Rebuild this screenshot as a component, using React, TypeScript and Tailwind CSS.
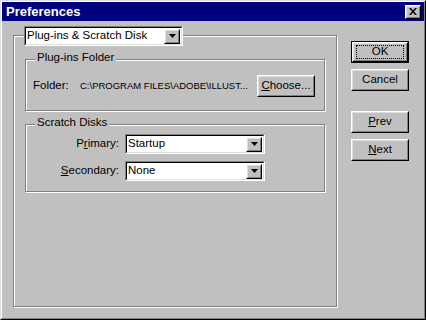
import type { ReactNode } from 'react';

function Raised({ children, className = '' }: { children: ReactNode; className?: string }) {
  return (
    <div className={`border border-t-white border-l-white border-r-black border-b-black ${className}`}>
      <div className="w-full h-full border border-t-[#dfdfdf] border-l-[#dfdfdf] border-r-[#808080] border-b-[#808080] bg-[#c0c0c0] flex items-center justify-center">
        {children}
      </div>
    </div>
  );
}

function Arrow() {
  return (
    <Raised className="w-[16px] h-[15px] shrink-0">
      <svg width="7" height="4" viewBox="0 0 7 4">
        <path d="M0 0h7L3.5 4z" fill="#000" />
      </svg>
    </Raised>
  );
}

function Select({ value, className = '' }: { value: string; className?: string }) {
  return (
    <div className={`border border-t-[#808080] border-l-[#808080] border-r-white border-b-white ${className}`}>
      <div className="w-full h-full border border-t-black border-l-black border-r-[#dfdfdf] border-b-[#dfdfdf] bg-white flex items-center pl-[1px] pr-[1px]">
        <span className="flex-1 leading-none">{value}</span>
        <Arrow />
      </div>
    </div>
  );
}

function Button({ children, isDefault = false }: { children: ReactNode; isDefault?: boolean }) {
  if (isDefault) {
    return (
      <div className="w-[58px] h-[22px] border border-black">
        <Raised className="w-full h-full">
          <div className="w-[48px] h-[14px] border border-dotted border-black flex items-center justify-center leading-none">
            {children}
          </div>
        </Raised>
      </div>
    );
  }
  return (
    <Raised className="w-[58px] h-[22px]">
      <span className="leading-none">{children}</span>
    </Raised>
  );
}

function Group({ title, className = '', children }: { title: string; className?: string; children: ReactNode }) {
  return (
    <div className={`relative border border-[#808080] shadow-[inset_1px_1px_0_#fff,1px_1px_0_#fff] ${className}`}>
      <span className="absolute left-[9px] top-[-8px] px-[2px] bg-[#c0c0c0] leading-none">{title}</span>
      {children}
    </div>
  );
}

export default function App() {
  return (
    <div className="w-[426px] h-[320px] bg-[#c0c0c0] border border-t-[#dfdfdf] border-l-[#dfdfdf] border-r-black border-b-black font-['Liberation_Sans',Arial,sans-serif] text-[11.5px] text-black">
      <div className="w-full h-full border border-t-white border-l-white border-r-[#808080] border-b-[#808080] flex flex-col">
        {/* title bar */}
        <div className="h-[19px] bg-[#000080] flex items-center justify-between pl-[4px] pr-[3px]">
          <span className="text-white font-bold text-[13px] leading-none">Preferences</span>
          <Raised className="w-[16px] h-[14px]">
            <svg width="8" height="7" viewBox="0 0 8 7">
              <path d="M0 0h2l2 2.5L6 0h2L5 3.5 8 7H6L4 4.5 2 7H0l3-3.5z" fill="#000" />
            </svg>
          </Raised>
        </div>

        <div className="flex pl-[11px]">
          {/* main group */}
          <div className="relative mt-[14px] w-[324px] h-[272px] border border-[#808080] shadow-[inset_1px_1px_0_#fff,1px_1px_0_#fff]">
            <Select value="Plug-ins & Scratch Disk" className="absolute left-[10px] top-[-10px] w-[159px] h-[20px]" />

            <Group title="Plug-ins Folder" className="ml-[11px] mt-[23px] w-[300px] h-[52px]">
              <div className="flex items-center h-full pl-[7px] pr-[9px] pt-[1px]">
                <span className="leading-none w-[47px] shrink-0">Folder:</span>
                <span className="flex-1 leading-none text-[9.5px] whitespace-nowrap overflow-hidden">
                  C:\PROGRAM FILES\ADOBE\ILLUST...
                </span>
                <Button>
                  <u>C</u>hoose...
                </Button>
              </div>
            </Group>

            <Group title="Scratch Disks" className="ml-[11px] mt-[13px] w-[300px] h-[68px]">
              <div className="flex flex-col gap-[7px] pt-[9px]">
                <div className="flex items-center">
                  <span className="w-[93px] text-right leading-none">
                    P<u>r</u>imary:
                  </span>
                  <Select value="Startup" className="ml-[6px] w-[140px] h-[20px]" />
                </div>
                <div className="flex items-center">
                  <span className="w-[93px] text-right leading-none">
                    <u>S</u>econdary:
                  </span>
                  <Select value="None" className="ml-[6px] w-[140px] h-[20px]" />
                </div>
              </div>
            </Group>
          </div>

          {/* buttons */}
          <div className="ml-[14px] mt-[20px] flex flex-col">
            <Button isDefault>OK</Button>
            <div className="mt-[6px]">
              <Button>Cancel</Button>
            </div>
            <div className="mt-[20px]">
              <Button>
                <u>P</u>rev
              </Button>
            </div>
            <div className="mt-[6px]">
              <Button>
                <u>N</u>ext
              </Button>
            </div>
          </div>
        </div>
      </div>
    </div>
  );
}
